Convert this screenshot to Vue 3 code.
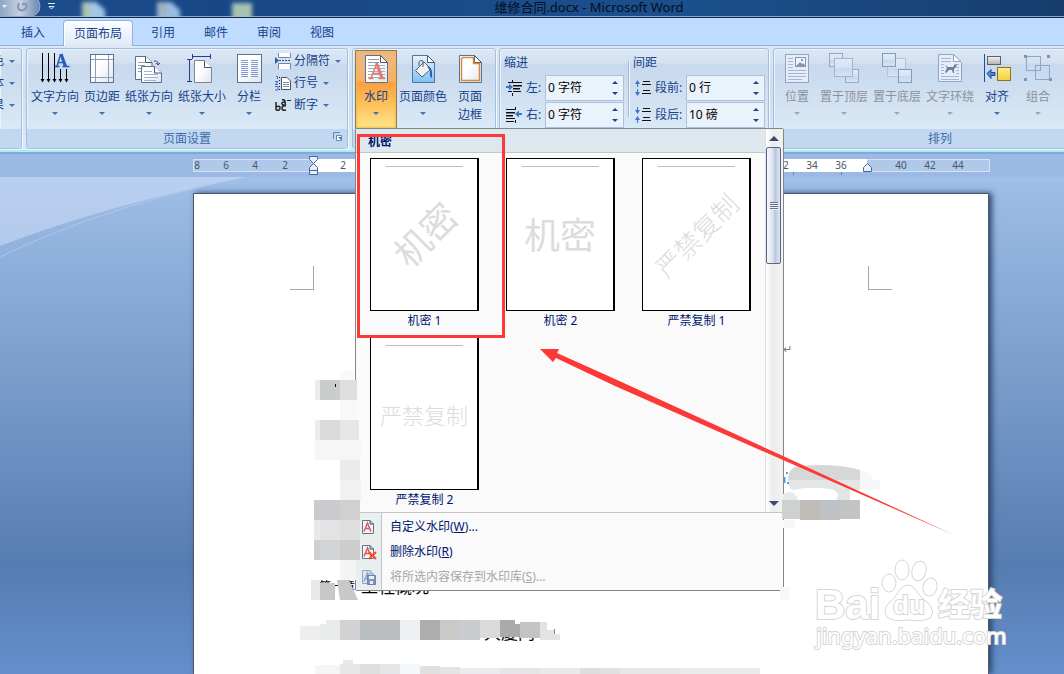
<script setup>
import { ref } from 'vue'

const tabs = ['插入', '页面布局', '引用', '邮件', '审阅', '视图']
const active = ref('页面布局')

const page = '<path d="M4.500 2.500H19.500L26.500 9.500V29.500H4.500Z" fill="url(#paper)" stroke="#5d728f"/><path d="M19.500 2.500V9.500H26.500Z" fill="#fff" stroke="#46566d"/>'
const lines = (x1, x2, ys, c) => ys.map(y => `<path d="M${x1} ${y}.500H${x2}" stroke="${c}"/>`).join('')

const icons = {
  direction:
    '<path d="M2.500 0V28M8.500 0V28M14.500 0V28M20.500 16V28M26.500 16V28" stroke="#000"/><path d="M0.500 26h4l-2 3.500zM6.500 26h4l-2 3.500zM12.500 26h4l-2 3.500zM18.500 26h4l-2 3.500zM24.500 26h4l-2 3.500z" fill="#000"/><path d="M20.500 1.500L17 13.500M18.500 9.500h6" fill="none" stroke="#2a5db0" stroke-width="1.500"/><path d="M21 1L25.500 13.500" stroke="#2a5db0" stroke-width="3.200"/><path d="M15 13.500h4.500M22.500 13.500h7" stroke="#2a5db0" stroke-width="1.500"/>',
  margins:
    '<rect x="3.500" y="1.500" width="23" height="28" fill="url(#paper)" stroke="#5d728f"/><path d="M8.500 2V29M21.500 2V29M4 6.500H26M4 24.500H26" stroke="#8a9dbd"/>',
  orient:
    '<path d="M1.500 3.500H12L18 9.500V26.500H1.500Z" fill="url(#paper)" stroke="#5d728f"/><path d="M11.500 3.500V9.500H18" fill="#fff" stroke="#46566d"/><path d="M4 9.500h7M4 12.500h7M4 15.500h5M4 18.500h3" stroke="#8a9dbd"/><path d="M7.500 13.500H20L27.500 20V29.500H7.500Z" fill="url(#paper)" stroke="#5d728f"/><path d="M20.500 13.500V20H27.500" fill="#fff" stroke="#46566d"/><path d="M10 18.500h8M10 21.500h14M10 24.500h14M10 27.500h12" stroke="#9fb4d4"/><path d="M20 8c4 0 4 1 4 4M22 10l2 2 2-2" fill="none" stroke="#344a78"/>',
  size:
    '<path d="M5 3.500H24M5.500 1V6M23.500 1V6M2.500 6V29M0 6.500H5M0 28.500H5" stroke="#263c8c"/><path d="M7.500 7.500H17L24.500 15V29.500H7.500Z" fill="url(#paper)" stroke="#7d8794"/><path d="M17.500 7.500V14.500H24.500" fill="#fff" stroke="#46566d"/>',
  columns:
    '<rect x="3.500" y="1.500" width="24" height="28" fill="url(#paper)" stroke="#5d728f"/>' +
    lines(7, 14, [7, 9, 11, 13, 15, 17, 19, 21, 23], '#7f9ccc') + lines(17, 24, [7, 9, 11, 13, 15, 17, 19, 21, 23], '#7f9ccc'),
  watermark:
    page + lines(7, 18, [6, 9], '#8d9aae') + lines(7, 24, [12, 15, 18, 21, 24], '#a6adb8') +
    '<path d="M15.500 11L10 25M12 20.500h7" fill="none" stroke="#e5786f" stroke-width="1.500"/><path d="M15.500 10L21 25" stroke="#e5786f" stroke-width="3"/><path d="M7.500 25.500h5M17.500 25.500h6.500" stroke="#e5786f" stroke-width="1.500"/>',
  color:
    '<path d="M4.500 2.500H19.500L26.500 9.500V29.500H4.500Z" fill="url(#sky)" stroke="#5d728f"/><path d="M19.500 2.500V9.500H26.500Z" fill="#fff" stroke="#46566d"/><path d="M7.500 17.500L16 9L23 16L14 24Z" fill="#eef0f4" stroke="#565c68"/><path d="M11 13V9Q12 6 15 8V14" fill="none" stroke="#565c68"/><path d="M19 13Q25 14 24 25Q21 24 22 18Z" fill="#2b5fb4"/>',
  border:
    page + '<path d="M7 4.500H18.500V10.500H24.500V27.500H6.500V4.500" fill="none" stroke="#d58a3d" stroke-width="1.500"/>',
  position:
    '<rect x="3.500" y="1.500" width="23" height="28" fill="#e6edf8" stroke="#8fa5c8"/><rect x="13.500" y="4.500" width="10" height="9" fill="#f2f5fa" stroke="#8795b4"/><path d="M14 13l4-4 2 2 1-1 3 3zM19 6h2v2h-2z" fill="#8795b4"/>' +
    lines(6, 11, [5, 8, 11, 14], '#a4b6d3') + lines(6, 24, [17, 20, 23], '#a4b6d3') + lines(6, 20, [26], '#a4b6d3'),
  front:
    '<rect x="0.500" y="0.500" width="13" height="13" fill="url(#dim)" stroke="#97abc9"/><rect x="16.500" y="16.500" width="13" height="13" fill="url(#dim)" stroke="#97abc9"/><rect x="5.500" y="5.500" width="18" height="18" fill="url(#dim)" stroke="#a0b3d0"/>',
  back:
    '<rect x="5.500" y="5.500" width="18" height="18" fill="url(#dim)" stroke="#b3c4dc"/><rect x="0.500" y="0.500" width="13" height="13" fill="url(#dim)" stroke="#8399bf"/><rect x="16.500" y="16.500" width="13" height="13" fill="url(#dim)" stroke="#8399bf"/>',
  wrap:
    '<path d="M3.500 1.500H18.500L26.500 9.500V28.500H3.500Z" fill="#e6edf8" stroke="#8fa5c8"/><path d="M18.500 1.500V8.500H26Z" fill="#fff" stroke="#8fa5c8"/>' +
    lines(6, 16, [5, 8], '#a4b6d3') + lines(6, 24, [23, 26], '#a4b6d3') + lines(6, 9, [11, 14, 17, 20], '#a4b6d3') + lines(21, 24, [11, 14, 17, 20], '#a4b6d3') +
    '<path d="M10 12l3 2h5l2-3 2 1-1 2-2 2v4h-1l-1-3h-3l-3 3-1-1 2-4z" fill="#6c7fa3"/>',
  align:
    '<path d="M2.500 1V29" stroke="#1d4c9c"/><rect x="5.500" y="3.500" width="13" height="8" fill="url(#gray)" stroke="#5f6064"/><rect x="15.500" y="14.500" width="13" height="13" fill="url(#gold)" stroke="#8f7323"/><path d="M5 20.500l4-4v3h4v3h-4v3z" fill="#4d87dc" stroke="#1d4c9c"/>',
  group:
    '<rect x="3.500" y="3.500" width="14" height="14" fill="none" stroke="#8fa5c8"/><rect x="12.500" y="12.500" width="14" height="14" fill="none" stroke="#8fa5c8"/><path d="M1 2h3v3H1zM24 2h3v3h-3zM1 25h3v3H1zM26 25h3v3h-3z" fill="#8093b5"/>'
}

const setup = [
  { t: '文字方向', i: 'direction' },
  { t: '页边距', i: 'margins' },
  { t: '纸张方向', i: 'orient' },
  { t: '纸张大小', i: 'size' },
  { t: '分栏', i: 'columns' }
]
const arrange = [
  { t: '位置', i: 'position', off: true },
  { t: '置于顶层', i: 'front', off: true },
  { t: '置于底层', i: 'back', off: true },
  { t: '文字环绕', i: 'wrap', off: true },
  { t: '对齐', i: 'align', off: false },
  { t: '组合', i: 'group', off: true }
]
const spacing = [
  {
    title: '缩进',
    rows: [
      { id: 'left', label: '左:', value: ref('0 字符'), svg: '<path d="M2 2.500h14M7 5.500h9M7 8.500h7M2 11.500h4M7 11.500h8M6.500 0v2M6.500 13v3" stroke="#111"/><path d="M7 6h9M7 9h7" stroke="#111"/><path d="M0 6h3V3.500l4 3.500L3 10.500V8H0z" fill="#3d74c9"/>' },
      { id: 'right', label: '右:', value: ref('0 字符'), svg: '<path d="M0 2.500h10M0 5.500h9M0 8.500h7M0 11.500h9M0 14.500h8M9.500 0v2M9.500 13v3" stroke="#111"/><path d="M0 6h9M0 9h7" stroke="#111"/><path d="M16 6h-3V3.500L9 7l4 3.500V8h3z" fill="#3d74c9"/>' }
    ]
  },
  {
    title: '间距',
    rows: [
      { id: 'before', label: '段前:', value: ref('0 行'), svg: '<path d="M8 1.500h7M7 4.500h9M8 10.500h7M7 13.500h9" stroke="#111"/><path d="M2 7V4H0l2.500-4L5 4H3v3zM2 9v3H0l2.500 4L5 12H3V9z" fill="#3d74c9"/>' },
      { id: 'after', label: '段后:', value: ref('10 磅'), svg: '<path d="M8 1.500h7M7 4.500h9M8 10.500h7M7 13.500h9" stroke="#111"/><path d="M2 0v3H0l2.500 4L5 3H3V0zM2 16v-3H0l2.500-4L5 13H3v3z" fill="#3d74c9"/>' }
    ]
  }
]

const ruler = [[8, 4], [6, 33], [4, 62], [2, 92], [2, 150], [32, 590], [34, 619], [36, 648], [40, 708], [42, 737], [44, 765]]

const cards = [
  { name: '机密 1', mark: '机密', cls: 'big slant' },
  { name: '机密 2', mark: '机密', cls: 'big' },
  { name: '严禁复制 1', mark: '严禁复制', cls: 'mid slant' },
  { name: '严禁复制 2', mark: '严禁复制', cls: 'small' }
]
const commands = [
  { text: '自定义水印', key: 'W', dots: '...', off: false, extra: '' },
  { text: '删除水印', key: 'R', dots: '', off: false, extra: '<path d="M9 8l7 7M16 8l-7 7" stroke="#f0522b" stroke-width="2"/>' },
  { text: '将所选内容保存到水印库', key: 'S', dots: '...', off: true, extra: '<path d="M7.500 6.500h8v9h-8z" fill="#7e93c0" stroke="#6d82b0"/><path d="M9 7h5v3H9zM10 12h3v3h-3z" fill="#e8eef8"/>' }
]

const tiles = [
  [340, 374, 3, 6, '#f9f9f9'], [343, 370, 11, 10, '#f9f9f9'], [315, 380, 5, 20, '#ececec'], [320, 380, 20, 20, '#cbcccc'], [340, 380, 17, 20, '#dedede'], [340, 400, 17, 20, '#f8f8f8'],
  [315, 420, 5, 20, '#ededed'], [320, 420, 20, 20, '#dadada'], [340, 420, 19, 20, '#e7e7e7'], [315, 440, 25, 20, '#f6f6f6'], [340, 440, 21, 20, '#f6f6f6'],
  [340, 460, 20, 20, '#ebebea'], [340, 480, 21, 20, '#f1f1ef'], [314, 500, 6, 20, '#cbcbcb'], [320, 500, 20, 20, '#c9cbce'], [340, 500, 20, 20, '#d0d0d0'],
  [314, 520, 6, 20, '#e9e9e9'], [320, 520, 20, 20, '#e3e3e3'], [340, 520, 20, 20, '#dedede'], [314, 540, 6, 20, '#cfcfd0'], [320, 540, 20, 20, '#d2d4d6'],
  [340, 540, 20, 20, '#cdcdcd'], [340, 560, 16, 20, '#f4f4f4'], [311, 580, 9, 20, '#e8e8e8'], [320, 583, 15, 17, '#c6c9c8'],
  [300, 626, 20, 14, '#eeeeee'], [320, 624, 6, 16, '#e8ebe9'], [326, 620, 14, 20, '#e8ebe9'], [340, 620, 20, 20, '#d4d1d3'], [360, 620, 20, 20, '#b9bec0'], [380, 620, 20, 20, '#bdbec1'],
  [400, 620, 20, 20, '#eef0f1'], [420, 620, 20, 20, '#adadae'], [440, 620, 20, 20, '#c9c9c8'], [460, 620, 20, 20, '#cbccd0'],
  [480, 620, 20, 18, '#d9dada'], [500, 620, 15, 17, '#aaaaaa'], [515, 624, 5, 13, '#aaaaaa'], [520, 622, 20, 16, '#c4c4c2'], [540, 622, 7, 18, '#e2e3e5'], [547, 630, 7, 10, '#e2e3e5'], [554, 634, 6, 6, '#e2e3e5'],
  [315, 665, 25, 9, '#f5f5f5'], [343, 660, 10, 4, '#e8e8e8'], [340, 664, 20, 10, '#e6e7e6'], [360, 664, 20, 10, '#dde0df'], [380, 664, 20, 10, '#e5e6e7'], [400, 664, 20, 10, '#f5f8fa'],
  [420, 666, 20, 8, '#e2e0df'], [440, 667, 20, 7, '#e4e3e4'], [460, 668, 40, 6, '#ebebee'], [500, 668, 40, 6, '#e6e4e6'], [540, 668, 40, 6, '#e9e9ea'], [580, 668, 20, 6, '#dddddd'], [600, 668, 20, 6, '#e0e0e0'], [620, 668, 60, 6, '#e7e7e7'], [680, 668, 80, 6, '#e9eaea'],
  [860, 480, 20, 9, '#f6f6f6'], [782, 500, 18, 19, '#cfd1d0'], [800, 500, 20, 20, '#c0bdb9'], [820, 500, 20, 20, '#bcc2c6'], [840, 500, 20, 19, '#c3c3c3'], [783, 520, 12, 8, '#f7f7f7'], [780, 587, 10, 13, '#f8f8f8']
]
</script>

<template>
  <div class="app">
    <svg class="defs" width="0" height="0" aria-hidden="true">
      <defs>
        <linearGradient id="paper" x1="0" y1="0" x2="1" y2="1"><stop offset="0.400" stop-color="#fff" /><stop offset="1" stop-color="#dfe4f0" /></linearGradient>
        <linearGradient id="sky" x1="0" y1="0" x2="0" y2="1"><stop offset="0" stop-color="#e8f3fd" /><stop offset="1" stop-color="#7cc0fb" /></linearGradient>
        <linearGradient id="dim" x1="0" y1="0" x2="0" y2="1"><stop offset="0" stop-color="#e2ecf7" /><stop offset="0.500" stop-color="#d6e2f2" /><stop offset="0.510" stop-color="#c6d6ec" /><stop offset="1" stop-color="#d6e4f4" /></linearGradient>
        <linearGradient id="gray" x1="0" y1="0" x2="0" y2="1"><stop offset="0" stop-color="#f4f4f4" /><stop offset="1" stop-color="#adafb5" /></linearGradient>
        <linearGradient id="gold" x1="0" y1="0" x2="0" y2="1"><stop offset="0" stop-color="#ffee8c" /><stop offset="1" stop-color="#f4cd3c" /></linearGradient>
      </defs>
    </svg>

    <header class="titlebar">
      <svg class="quick" width="260" height="18" aria-hidden="true">
        <defs>
          <filter id="soft"><feGaussianBlur stdDeviation="2" /></filter>
          <linearGradient id="pill" x1="0" y1="0" x2="1" y2="0"><stop offset="0" stop-color="#8aa5c8" /><stop offset="0.500" stop-color="#c6d0df" /><stop offset="1" stop-color="#6787b4" /></linearGradient>
        </defs>
        <path d="M0 -1H38Q44 12 32 16.500H0Z" fill="url(#pill)" stroke="#91a9c8" />
        <path d="M19 3q-3 7 3 7.500q6-1 4-7M22 4h4" fill="none" stroke="#8495b2" stroke-width="2" />
        <path d="M2 5h5L4.500 8z" fill="#f8eccb" />
        <path d="M48 3.500h7M49 6.500h5l-2.500 2.500z" fill="none" stroke="#dce8f6" />
        <g filter="url(#soft)">
          <path d="M82 2h14l9 8v10H82z" fill="#a4c6e6" /><path d="M82 2h8v18h-8z" fill="#a9c6b4" />
          <path d="M157 2h14l9 8v10h-23z" fill="#9cbde2" /><path d="M158 3h9v12h-9z" fill="#a2b2ba" />
          <path d="M232 3h20v17h-20z" fill="#a9c3b3" />
        </g>
      </svg>
      <h1>维修合同.docx - Microsoft Word</h1>
    </header>

    <nav class="tabs">
      <button v-for="t in tabs" :key="t" :class="{ active: t === active }" @click="active = t">{{ t }}</button>
    </nav>

    <section class="ribbon">
      <div class="group themes">
        <div class="body">
          <button v-for="t in ['颜色', '字体', '效果']" :key="t" class="line"><span>{{ t }}</span><i class="arrow"></i></button>
        </div>
        <div class="caption"></div>
      </div>

      <div class="group setup">
        <div class="body">
          <button v-for="b in setup" :key="b.t" class="big">
            <svg width="30" height="30" v-html="icons[b.i]"></svg>
            <span>{{ b.t }}</span><i class="arrow"></i>
          </button>
          <div class="stack">
            <button class="line">
              <svg width="16" height="16"><path d="M3.500 0V4.500H15.500V0M3.500 16V10.500H15.500V16" fill="#fff" stroke="#6d87b0" /><path d="M4 7.500h12" stroke="#344a78" stroke-dasharray="2 1" /><path d="M0 4l4 3.500L0 11z" fill="#2a5db0" /></svg>
              <span>分隔符</span><i class="arrow"></i>
            </button>
            <button class="line">
              <svg width="16" height="16"><path d="M6.500 2.500H12L15.500 6V14.500H6.500Z" fill="#fff" stroke="#46566d" /><path d="M8 7.500h6M8 9.500h6M8 11.500h6" stroke="#7f8fa8" /><path d="M1 1.500h1.500V4M0 6.500h3L0.500 9.500H3M0 11.500h3V15H0" fill="none" stroke="#3c6bc0" /><path d="M4.500 2v13" stroke="#111" stroke-dasharray="1 2" /></svg>
              <span>行号</span><i class="arrow"></i>
            </button>
            <button class="line">
              <svg width="16" height="16"><path d="M1 5v8M1 10q4-2 4 1t-4 2M11 9q-4-1-4 2t4 2M7 3q4-1 3 4M10 5q-4 0-3 2t4 0" fill="none" stroke="#222" stroke-width="1.500" /><path d="M12 3.500h4" stroke="#222" /></svg>
              <span>断字</span><i class="arrow"></i>
            </button>
          </div>
        </div>
        <div class="caption">页面设置
          <button class="launcher" aria-label="页面设置"><svg width="9" height="9"><path d="M0.500 7V0.500H7" fill="none" stroke="#5f87b8" /><path d="M3.500 3.500h5v5h-5z" fill="#fff" stroke="#5f87b8" /><path d="M5 5h3v3z" fill="#416a9e" /></svg></button>
        </div>
      </div>

      <div class="group backdrop">
        <div class="body">
          <button class="big pressed"><svg width="30" height="30" v-html="icons.watermark"></svg><span>水印</span><i class="arrow"></i></button>
          <button class="big"><svg width="30" height="30" v-html="icons.color"></svg><span>页面颜色</span><i class="arrow"></i></button>
          <button class="big edge"><svg width="30" height="30" v-html="icons.border"></svg><span>页面<br />边框</span></button>
        </div>
        <div class="caption"></div>
      </div>

      <div class="group para">
        <div class="body">
          <div v-for="c in spacing" :key="c.title" class="fields">
            <div class="head">{{ c.title }}</div>
            <div v-for="r in c.rows" :key="r.id" class="field">
              <svg width="16" height="16" v-html="r.svg"></svg>
              <label :for="r.id">{{ r.label }}</label>
              <div class="spin">
                <input :id="r.id" v-model="r.value.value" type="text" />
                <div class="steps"><button aria-label="增加"><i class="up"></i></button><button aria-label="减少"><i class="down"></i></button></div>
              </div>
            </div>
          </div>
        </div>
        <div class="caption"></div>
      </div>

      <div class="group arrange">
        <div class="body">
          <button v-for="b in arrange" :key="b.t" class="big" :disabled="b.off">
            <svg width="30" height="30" v-html="icons[b.i]"></svg>
            <span>{{ b.t }}</span><i class="arrow"></i>
          </button>
        </div>
        <div class="caption">排列</div>
      </div>
    </section>

    <div class="rulerbar">
      <svg width="797" height="24" aria-label="标尺">
        <rect x="0.500" y="5.500" width="796" height="12" fill="#b0c9eb" stroke="#d3e2f7" />
        <rect x="120" y="5" width="554" height="13" fill="#fff" />
        <text v-for="(n, k) in ruler" :key="k" :x="n[1]" y="15" text-anchor="middle">{{ n[0] }}</text>
        <path d="M600.500 18v3M648.500 18v3" stroke="#6a7f9c" />
        <path d="M116.500 2.500h8v3l-4 4l4 4v7h-8v-7l4-4l-4-4zM116.500 16.500h8" fill="#e7effa" stroke="#42689f" />
        <path d="M670.500 17.500v-4l4-4l4 4v4z" fill="#e7effa" stroke="#42689f" />
      </svg>
    </div>

    <main class="workspace">
      <svg class="swoosh" width="260" height="90" aria-hidden="true">
        <path d="M0 0H247Q110 27 0 69Z" fill="#d4e2f8" opacity="0.500" />
        <path d="M205 9Q90 36 0 80" fill="none" stroke="#b5cdf0" opacity="0.700" />
      </svg>
      <article class="paper">
        <span class="corner left"></span><span class="corner right"></span>
        <p class="return">↵</p>
        <p class="chapter"><small>第一章</small>工程概况</p>
        <p class="entry">大厦门</p>
      </article>
    </main>

    <div class="dropdown">
      <div class="gallery">
        <div class="shelf">
          <h2>机密</h2>
          <div class="cards">
            <button v-for="c in cards" :key="c.name" class="card">
              <span class="sheet"><span class="mark" :class="c.cls">{{ c.mark }}</span></span>
              <span class="name">{{ c.name }}</span>
            </button>
          </div>
        </div>
        <div class="scroll">
          <i class="tri upward"></i>
          <div class="thumb"><i></i></div>
          <i class="tri"></i>
        </div>
      </div>
      <div class="commands">
        <button v-for="c in commands" :key="c.key" :disabled="c.off">
          <span class="ico"><svg width="17" height="16"><path d="M2.500 1.500H10L13.500 5V14.500H2.500Z" :fill="c.off ? '#dfe7f4' : '#f4f5f9'" :stroke="c.off ? '#91a4c7' : '#64748f'" /><path d="M10 1.500V5H13.500" fill="none" :stroke="c.off ? '#91a4c7' : '#34496d'" /><path d="M4 12.500L7.500 4L11 12.500M5.500 9.500h4" fill="none" :stroke="c.off ? '#8fa4cc' : '#db5d53'" stroke-width="1.500" /><g v-html="c.extra"></g></svg></span>
          <span>{{ c.text }}(<u>{{ c.key }}</u>){{ c.dots }}</span>
        </button>
      </div>
    </div>

    <svg class="overlay" width="1064" height="674" aria-hidden="true">
      <rect v-for="(t, k) in tiles" :key="k" :x="t[0]" :y="t[1]" :width="t[2]" :height="t[3]" :fill="t[4]" />
      <path d="M337 580H349L358 600H340Z" fill="#c6c9c8" />
      <path d="M335.500 384v3" stroke="#111" /><path d="M554.500 629v5" stroke="#888" />
      <path d="M788 480Q788 467 800 466Q835 463 860 470V480Z" fill="#d6d8d8" />
      <path d="M860 470Q873 472 873 480H860Z" fill="#f8f8f8" />
      <path d="M788 480H860V490H850V500H836Q842 492 830 489Q810 486 793 490Q788 488 788 480Z" fill="#e4e5e5" />
      <path d="M783 494Q795 488 798 500H783Z" fill="#e7e9ea" />
      <path d="M784.500 477v6" stroke="#3aa0f0" stroke-width="2" /><path d="M786 473h2M787 483h2" stroke="#222" />
      <rect x="358.500" y="135.500" width="145" height="201" fill="none" stroke="#fd3938" stroke-width="3" />
      <path d="M540 349L559 349L557 353L615 379L783 456L954 535L783 460L615 386L556 358L553 362Z" fill="#fd3938" />
      <g class="logo">
        <text x="815" y="619" class="latin">Bai</text>
        <ellipse cx="889" cy="583" rx="7" ry="9" /><ellipse cx="902" cy="570" rx="7" ry="10" /><ellipse cx="919" cy="571" rx="7" ry="10" transform="rotate(15 919 571)" /><ellipse cx="930" cy="587" rx="7" ry="9" transform="rotate(15 930 587)" />
        <path d="M908 585Q913 585 917 592Q920 597 928 603Q936 611 930 618Q924 622 908 620Q892 622 887 617Q882 609 890 602Q896 597 899 591Q903 585 908 585Z" />
        <text x="893" y="614" class="du">du</text>
        <text x="938" y="616" class="cjk">经验</text>
        <text x="816" y="644" class="url">jingyan.baidu.com</text>
      </g>
    </svg>
  </div>
</template>

<style>
body { margin: 0; overflow: hidden; }
</style>

<style scoped>
.app { position: relative; display: flex; flex-direction: column; min-height: 100vh; overflow: hidden; font: 12px/18px "Noto Sans", "Noto Sans CJK SC", sans-serif; color: #15428b; }
.app *, .app { box-sizing: border-box; }
.defs { position: absolute; }
button { border: 0; padding: 0; background: none; color: inherit; font: inherit; }
svg { display: block; flex: none; }
h1, h2, p { margin: 0; font: inherit; }

.titlebar { display: flex; height: 18px; background: linear-gradient(90deg, #1e4e8d, #184785 20%, #1b508c 65%, #163d6c); border-bottom: 1px solid #14284a; box-shadow: inset 0 -1px #86a8cf; color: #050d1c; overflow: hidden; }
.quick { width: 260px; }
.titlebar h1 { flex: 1; padding-right: 146px; text-align: center; font-size: 13px; line-height: 14px; }

.tabs { display: flex; gap: 7px; height: 28px; padding: 2px 10px 0; background: #bfdbff; border-bottom: 1px solid #8db2e3; }
.tabs button { height: 26px; padding: 0 10px; border: 1px solid transparent; line-height: 24px; }
.tabs .active { border-color: #8db2e3; border-bottom: 0; border-radius: 4px 4px 0 0; background: linear-gradient(#fbfdff, #dfeaf7); box-shadow: inset 1px 1px #fff; }

.ribbon { display: flex; gap: 4px; padding: 2px 0 1px; background: linear-gradient(#dce8f5, #cbddf0 40%, #dceaf7); border-bottom: 2px solid #a8eef5; height: 106px; }
.group { flex: none; display: flex; flex-direction: column; height: 101px; border: 1px solid #a2bfdc; border-radius: 3px; box-shadow: 1px 1px #eff6fd, inset 1px 1px #eaf2fb; background: linear-gradient(#dce7f4 0, #d3e0f0 14px, #c8d8ed 15px, #d9e9f6 80px); overflow: hidden; }
.body { display: flex; height: 80px; padding-top: 1px; }
.caption { display: flex; justify-content: center; position: relative; flex: 1; background: #c1d8f0; color: #3e6aaa; line-height: 20px; }
.launcher { position: absolute; right: 5px; top: 3px; }
.themes { width: 22px; border-left: 0; border-radius: 0 3px 3px 0; }
.themes .body { flex-direction: column; align-items: flex-end; padding-right: 6px; }
.setup { width: 322px; }
.setup .body { gap: 5px; padding-left: 4px; }
.backdrop { width: 144px; }
.backdrop .body { gap: 2px; padding-left: 2px; }
.para { width: 270px; margin-left: -1px; }
.arrange { width: 334px; }
.arrange .body { gap: 5px; padding-left: 5px; }

.big { display: flex; flex-direction: column; align-items: center; flex: none; min-width: 36px; height: 79px; padding-top: 3px; white-space: nowrap; }
.big span { margin-top: 5px; line-height: 18px; }
.big .arrow { margin-top: 6px; }
.big:disabled { color: #8d929a; }
.big:disabled .arrow { border-top-color: #a3a7ad; }
.edge { min-width: 42px; }
.pressed { min-width: 42px; border: 1px solid #8f7b58; border-bottom-color: #f2c13b; padding-top: 2px; background: linear-gradient(#e9b98a, #f7b165 30px, #fc9d3c 31px, #fdc35d 55px, #ffe88f 78px); box-shadow: inset 0 0 2px 1px #f3ba4a; }
.arrow { width: 0; height: 0; border: 3px solid transparent; border-top: 3px solid #4370b4; border-bottom: 0; }
.stack { display: flex; flex-direction: column; margin-left: 3px; }
.line { display: flex; align-items: center; gap: 3px; height: 22px; white-space: nowrap; }
.line .arrow { margin-left: 2px; }

.fields { padding: 3px 4px 0; }
.fields + .fields { position: relative; padding-left: 5px; }
.fields + .fields::before { content: ""; position: absolute; left: 0; top: 11px; height: 56px; border-left: 1px solid #9db9da; border-right: 1px solid #f2f7fd; }
.head { height: 21px; line-height: 19px; }
.field { display: flex; align-items: center; height: 27px; }
.field svg { margin-left: 2px; }
.field label { width: 23px; padding: 1px 4px 0; white-space: nowrap; }
.fields + .fields label { width: 35px; }
.spin { display: flex; width: 79px; height: 26px; border: 1px solid #abc1de; background: #eaf2fb; }
.spin input { flex: 1; min-width: 0; border: 0; padding: 0 2px; background: none; color: #000; font: inherit; outline: 0; }
.steps { display: flex; flex-direction: column; justify-content: space-between; width: 16px; padding: 5px 0; }
.steps button { display: flex; justify-content: center; }
.up, .down { border: 3px solid transparent; border-bottom-color: #1b4488; border-top: 0; }
.down { border-top: 3px solid #1b4488; border-bottom: 0; }

.rulerbar { height: 25px; padding-left: 193px; border-top: 2px solid #86a7d6; background: #9bb9e2; }
.rulerbar text { font-size: 10px; fill: #4b5563; }

.workspace { position: relative; display: flex; flex: 1; padding: 16px 75px 0 193px; background: linear-gradient(#9fbee8, #83a5d2 30%, #567db1 78%, #648fcb); }
.swoosh { position: absolute; left: 0; top: 0; }
.paper { position: relative; flex: 1; min-height: 480px; border: 1px solid #4e5868; border-bottom: 0; background: #fff; box-shadow: 3px 0 6px #2c476f; color: #000; }
.corner { position: absolute; top: 72px; width: 24px; height: 24px; border: 0 solid #a8a8a8; border-bottom-width: 1px; }
.left { left: 96px; border-right-width: 1px; }
.right { right: 96px; border-left-width: 1px; }
.return { position: absolute; left: 589px; top: 146px; font-size: 11px; color: #777; }
.chapter { position: absolute; left: 125px; top: 381px; display: flex; gap: 6px; font-size: 17px; line-height: 24px; white-space: nowrap; }
.chapter small { font-size: 12px; }
.entry { position: absolute; left: 290px; top: 427px; font-size: 17px; line-height: 24px; }

.dropdown { position: absolute; left: 355px; top: 128px; width: 429px; border: 1px solid #868686; border-radius: 2px; background: #fafafa; color: #00156e; }
.gallery { display: flex; height: 384px; border-bottom: 1px solid #c5c5c5; overflow: hidden; }
.shelf { flex: 1; }
.shelf h2 { height: 24px; padding-left: 12px; border-bottom: 1px solid #c5c5c5; background: #dde7ee; font-weight: 700; line-height: 26px; }
.cards { display: grid; grid-template-columns: repeat(3, 109px); gap: 6px 27px; padding: 5px 14px 0; }
.card { display: flex; flex-direction: column; height: 173px; }
.sheet { display: flex; align-items: center; justify-content: center; position: relative; width: 109px; height: 153px; border: 1px solid #000; border-right-width: 2px; background: #fff; overflow: hidden; }
.sheet::before { content: ""; position: absolute; top: 7px; left: 15px; right: 14px; border-top: 1px solid #bdbdbd; }
.mark { color: #dcdcdc; font-family: "Noto Sans CJK SC", sans-serif; font-weight: 300; white-space: nowrap; line-height: 40px; }
.mark.big { display: block; height: auto; min-width: 0; padding: 0; margin: 0 0 4px; font-size: 36px; line-height: 40px; font-weight: 400; }
.mark.mid { font-size: 26px; }
.mark.small { font-size: 22px; }
.mark.slant { transform: rotate(-45deg); }
.name { width: 109px; text-align: center; line-height: 20px; }
.scroll { display: flex; flex-direction: column; align-items: center; width: 18px; padding: 7px 2px 6px 0; border-left: 1px solid #e0e0e0; background: linear-gradient(90deg, #fff, #ececec 40%, #f3f3f3); }
.tri { border: 5px solid transparent; border-top-color: #3b4977; border-bottom: 0; }
.upward { border-bottom: 5px solid #3b4977; border-top: 0; }
.thumb { display: flex; align-items: center; justify-content: center; width: 15px; height: 117px; margin: 6px 0 auto; border: 1px solid #52658f; border-radius: 2px; background: linear-gradient(90deg, #f4f7fb, #dce3ed 45%, #b8c6dc 60%, #dfe6f2); }
.thumb i { width: 8px; height: 8px; background: repeating-linear-gradient(#6b7382 0 1px, #edf1f7 1px 2px); }
.commands { padding: 1px 0; background: linear-gradient(90deg, #e9eeee 25px, #c5c5c5 25px 26px, #fafafa 26px); }
.commands button { display: flex; align-items: center; gap: 8px; width: 100%; height: 25px; }
.commands button:disabled { color: #a7a7a7; }
.ico { display: flex; width: 26px; padding-left: 4px; }

.overlay { position: absolute; left: 0; top: 0; pointer-events: none; }
.logo { fill: #fff; stroke: #d6d6d6; stroke-width: 1px; }
.logo text { paint-order: stroke; stroke-width: 2px; }
.latin { font: 700 42px "Liberation Sans", sans-serif; }
.du { font: 700 26px "Liberation Sans", sans-serif; }
.cjk { font: 700 32px "Noto Sans CJK SC", sans-serif; }
.url { font: 22px "Noto Sans", sans-serif; }
</style>
